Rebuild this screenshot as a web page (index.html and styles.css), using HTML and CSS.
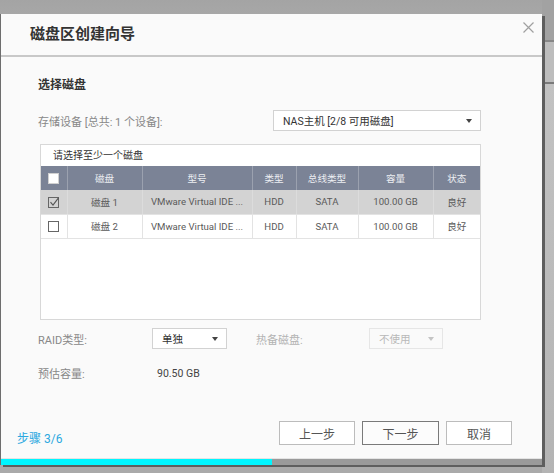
FILE: index.html
```html
<!DOCTYPE html>
<html lang="zh-CN">
<head>
<meta charset="utf-8">
<title>磁盘区创建向导</title>
<link rel="stylesheet" href="styles.css">
</head>
<body>
<div class="desktop">
  <div class="bg-strip"></div>
  <div class="dialog">
    <div class="dlg-header">
      <h1 class="dlg-title">磁盘区创建向导</h1>
      <span class="close"><svg width="11" height="11" viewBox="0 0 11 11"><path d="M0.5 0.5L10.5 10.5M10.5 0.5L0.5 10.5" stroke="#a0a0a0" stroke-width="1.2" fill="none"/></svg></span>
    </div>
    <div class="dlg-body">
      <h2 class="section-title">选择磁盘</h2>
      <div class="form-row storage-row">
        <span class="label">存储设备 [总共: 1 个设备]:</span>
        <div class="select select-wide"><span>NAS主机 [2/8 可用磁盘]</span><span class="caret"></span></div>
      </div>
      <div class="panel">
        <div class="panel-caption">请选择至少一个磁盘</div>
        <table class="disk-table">
          <colgroup>
            <col class="c-cb"><col class="c-disk"><col class="c-model"><col class="c-type"><col class="c-bus"><col class="c-cap"><col class="c-status">
          </colgroup>
          <thead>
            <tr>
              <th><span class="cb cb-head"></span></th>
              <th>磁盘</th><th>型号</th><th>类型</th><th>总线类型</th><th>容量</th><th>状态</th>
            </tr>
          </thead>
          <tbody>
            <tr class="selected">
              <td><span class="cb"><svg width="10" height="10" viewBox="0 0 10 10"><path d="M1.5 5.2L4 8.2L9.5 0.8" stroke="#555" stroke-width="1.1" fill="none"/></svg></span></td>
              <td>磁盘 1</td><td>VMware Virtual IDE ...</td><td>HDD</td><td>SATA</td><td>100.00 GB</td><td>良好</td>
            </tr>
            <tr>
              <td><span class="cb"></span></td>
              <td>磁盘 2</td><td>VMware Virtual IDE ...</td><td>HDD</td><td>SATA</td><td>100.00 GB</td><td>良好</td>
            </tr>
          </tbody>
        </table>
      </div>
      <div class="form-row raid-row">
        <span class="label label-raid">RAID类型:</span>
        <div class="select select-raid"><span>单独</span><span class="caret"></span></div>
        <span class="label label-spare">热备磁盘:</span>
        <div class="select select-spare disabled"><span>不使用</span><span class="caret"></span></div>
      </div>
      <div class="form-row est-row">
        <span class="label label-est">预估容量:</span>
        <span class="value">90.50 GB</span>
      </div>
    </div>
    <div class="dlg-footer">
      <span class="step">步骤 3/6</span>
      <div class="buttons">
        <button class="btn btn-prev">上一步</button>
        <button class="btn btn-next">下一步</button>
        <button class="btn btn-cancel">取消</button>
      </div>
    </div>
    <div class="progress"><div class="progress-fill" style="width:50%"></div></div>
  </div>
</div>
</body>
</html>
```

FILE: styles.css
```css
* { box-sizing: border-box; }
html, body { margin: 0; padding: 0; }
body {
  width: 554px;
  height: 473px;
  overflow: hidden;
  background: #a9a9a9;
  font-family: Roboto, "Noto Sans CJK SC", sans-serif;
}
.desktop {
  position: relative;
  width: 554px;
  height: 473px;
  background: linear-gradient(#a4a4a4 0, #a7a7a7 14px, #aaaaaa 100%);
}
.bg-strip {
  position: absolute;
  left: 542px;
  top: 0;
  width: 12px;
  height: 473px;
  background: linear-gradient(#a2a2a2 0, #a2a2a2 40px, #878787 40px, #878787 42px, #bdbdbd 42px, #bdbdbd 82px, #7a7a7a 82px, #7a7a7a 84px, #c2c2c2 84px, #b4b4b4 100%);
}
.dialog {
  position: absolute;
  left: 0;
  top: 14px;
  width: 542px;
  height: 451px;
  background: #fafafa;
  border-left: 1px solid #6d6d6d;
  box-shadow: 3px 2px 0 #5e5e5e;
  display: flex;
  flex-direction: column;
}
.dlg-header {
  position: relative;
  height: 43px;
  flex: none;
  border-bottom: 2px solid #c8c8c8;
  padding-left: 29px;
}
.dlg-title {
  margin: 0;
  font-size: 15px;
  font-weight: bold;
  line-height: 41px;
  color: #333;
}
.close {
  position: absolute;
  right: 8px;
  top: 8px;
  width: 11px;
  height: 11px;
  display: block;
}
.close svg { display: block; }
.dlg-body {
  flex: 1;
  padding: 20px 61px 0 37px;
}
.section-title {
  margin: 0;
  font-size: 12px;
  font-weight: bold;
  line-height: 16px;
  color: #333;
}
.form-row {
  display: flex;
  align-items: center;
}
.label {
  font-size: 11px;
  color: #888;
  white-space: nowrap;
}
.storage-row {
  margin-top: 17px;
  height: 21px;
  justify-content: space-between;
}
.select {
  height: 21px;
  border: 1px solid #d2d2d2;
  background: #fff;
  display: flex;
  align-items: center;
  justify-content: space-between;
  padding: 0 8px 0 9px;
  font-size: 10.5px;
  color: #333;
}
.caret {
  width: 0;
  height: 0;
  border-left: 3.5px solid transparent;
  border-right: 3.5px solid transparent;
  border-top: 4px solid #444;
}
.select-wide { width: 208px; }
.panel {
  margin-top: 13px;
  margin-left: 2px;
  width: 441px;
  height: 176px;
  border: 1px solid #d8d8d8;
  background: #fff;
}
.panel-caption {
  height: 21px;
  line-height: 21px;
  padding-left: 12px;
  font-size: 10px;
  color: #333;
}
.disk-table {
  width: 439px;
  border-collapse: collapse;
  table-layout: fixed;
  font-size: 9.6px;
}
.c-cb { width: 26px; }
.c-disk { width: 75px; }
.c-model { width: 110px; }
.c-type { width: 44px; }
.c-bus { width: 62px; }
.c-cap { width: 75px; }
.c-status { width: 47px; }
.disk-table th {
  height: 24px;
  padding: 0;
  background: #7b8396;
  color: #eceef2;
  font-weight: normal;
  text-align: center;
  border-left: 1px solid #9ba1af;
}
.disk-table th:first-child, .disk-table td:first-child { border-left: none; }
.disk-table td {
  height: 24px;
  padding: 0;
  text-align: center;
  color: #5a5a5a;
  white-space: nowrap;
  overflow: hidden;
  border-left: 1px solid #e3e3e3;
  border-bottom: 1px solid #e3e3e3;
}
.disk-table tr.selected td {
  background: #d3d3d3;
  border-left-color: #dcdcdc;
}
.cb {
  display: inline-block;
  vertical-align: middle;
  width: 11px;
  height: 11px;
  border: 1px solid #666;
  background: #fff;
  position: relative;
}
.cb svg {
  position: absolute;
  left: 0;
  top: -1px;
}
.cb-head { border-color: #d0d0d0; }
.disk-table tr.selected .cb { background: transparent; }
.raid-row {
  margin-top: 8px;
  height: 21px;
}
.label-raid { width: 114px; }
.select-raid { width: 75px; }
.label-spare { width: 113px; margin-left: 29px; color: #b3b3b3; }
.select-spare { width: 74px; }
.select.disabled {
  border-color: #e6e6e6;
  background: #fafafa;
  color: #b8b8b8;
}
.select.disabled .caret { border-top-color: #c4c4c4; }
.est-row {
  margin-top: 16px;
  height: 16px;
}
.label-est { width: 119px; }
.value { font-size: 10.5px; color: #444; }
.dlg-footer {
  flex: none;
  height: 40px;
  display: flex;
  align-items: flex-end;
  justify-content: space-between;
  padding: 0 30px 13px 16px;
}
.step {
  font-size: 12px;
  line-height: 16px;
  color: #2ba8e0;
  margin-bottom: -2px;
}
.buttons {
  display: flex;
  gap: 7px;
}
.btn {
  height: 24px;
  border: 1px solid #bcbcbc;
  background: #fff;
  color: #555;
  font-family: Roboto, "Noto Sans CJK SC", sans-serif;
  font-size: 12px;
  padding: 0;
}
.btn-prev { width: 76px; }
.btn-next { width: 77px; border-color: #7a7a7a; background: #fcfcfc; }
.btn-cancel { width: 66px; }
.progress {
  flex: none;
  height: 7px;
  background: #9a9a9a;
  border-top: 1px solid #e4e4e4;
}
.progress-fill {
  height: 100%;
  background: #00f6ff;
}
```
